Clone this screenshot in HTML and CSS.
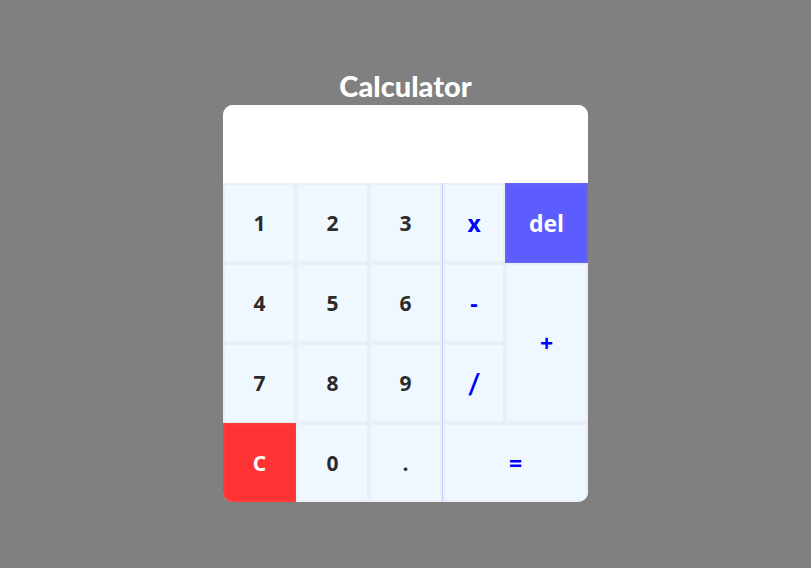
FILE: index.html
```html
<!DOCTYPE html>
<html lang="en">
<head>
<meta charset="utf-8">
<title>Calculator</title>
<meta name="viewport" content="width=device-width, initial-scale=1">
<link rel="stylesheet" href="styles.css">
</head>
<body>
<main class="page">
  <h1 class="title">Calculator</h1>
  <section class="calculator">
    <input class="display" type="text" aria-label="Result" readonly>
    <div class="keys">
      <div class="numbers">
        <button class="key">1</button>
        <button class="key">2</button>
        <button class="key">3</button>
        <button class="key">4</button>
        <button class="key">5</button>
        <button class="key">6</button>
        <button class="key">7</button>
        <button class="key">8</button>
        <button class="key">9</button>
        <button class="key clear">C</button>
        <button class="key">0</button>
        <button class="key">.</button>
      </div>
      <div class="operators">
        <button class="key operator">x</button>
        <button class="key operator delete">del</button>
        <button class="key operator">-</button>
        <button class="key operator plus">+</button>
        <button class="key operator divide">/</button>
        <button class="key operator equals">=</button>
      </div>
    </div>
  </section>
</main>
</body>
</html>
```
FILE: styles.css
```css
* {
  box-sizing: border-box;
}

body {
  margin: 0;
  background: #808080;
  font-family: "Open Sans", "Noto Sans", sans-serif;
}

.page {
  min-height: 100vh;
  display: flex;
  flex-direction: column;
  align-items: center;
  justify-content: center;
}

.title {
  margin: 0;
  color: #fff;
  font-family: Lato, sans-serif;
  font-size: 29px;
  font-weight: 900;
  line-height: 39px;
}

.calculator {
  width: 45%;
  height: 70vh;
  display: flex;
  flex-direction: column;
  border-radius: 10px;
  overflow: hidden;
  background: #fff;
}

.display {
  width: 100%;
  height: 78px;
  flex: none;
  padding: 0 16px;
  border: 0;
  outline: 0;
  background: #fff;
  font: 700 24px "Open Sans", sans-serif;
  text-align: right;
}

.keys {
  flex: 1;
  display: grid;
  grid-template-columns: 3fr 2fr;
}

.numbers,
.operators {
  display: grid;
  grid-template-rows: repeat(3, 80fr) 79fr;
}

.numbers {
  grid-template-columns: repeat(3, 1fr);
}

.operators {
  grid-template-columns: 3fr 4fr;
  border-left: 1px solid #ccccff;
}

.key {
  min-width: 0;
  padding: 0;
  border: 2px solid rgba(128, 128, 128, 0.07);
  background: #f0f8ff;
  color: #2b2b2b;
  font: 700 21px "Open Sans", "Noto Sans", sans-serif;
  cursor: pointer;
}

.operator {
  color: #0000ff;
  font-size: 23px;
}

.clear {
  border-color: #fe3b3b;
  background: #ff3333;
  color: #fff;
}

.delete {
  border-color: #6464f7;
  background: #5c5cff;
  color: #fff;
}

.divide {
  font-family: Lato, sans-serif;
  font-size: 28px;
}

.plus {
  grid-row: span 2;
}

.equals {
  grid-column: span 2;
}
```
